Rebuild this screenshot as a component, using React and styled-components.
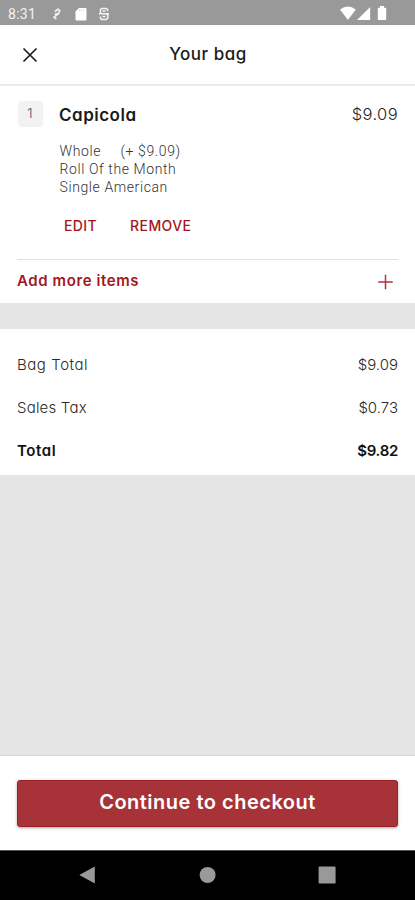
import styled, { createGlobalStyle } from "styled-components";

const options = ["Roll Of the Month", "Single American"];

const totals = [
  { name: "Bag Total", amount: "$9.09", space: "0.55px" },
  { name: "Sales Tax", amount: "$0.73", space: "0.2px" },
  { name: "Total", amount: "$9.82", bold: true, space: "0.6px" },
];

const App = () => {
  return (
    <>
      <GlobalStyle />
      <Screen>
        <StatusBar>
          <Clock>8:31</Clock>
          <StatusIcon width="10" height="14" viewBox="0 0 10 14">
            <path d="M2.8 4.6 6 2.2l1.8 1.5-1.2 2.6-3.8 1.1M7 6.6 4.2 8.4 2 10.2l2.4 1.8" fill="none" stroke="#eee" strokeWidth="1.7" />
          </StatusIcon>
          <SdCard width="12" height="14" viewBox="0 0 12 14">
            <path d="M4 1h6.5a1 1 0 0 1 1 1v10.5a1 1 0 0 1-1 1h-9a1 1 0 0 1-1-1V4.5z" fill="#fff" />
            <path d="M4.7 2.4v1.6M6.8 2.4v1.6M8.9 2.4v1.6" stroke="#ccc" strokeWidth="0.7" />
          </SdCard>
          <AppIcon width="12" height="14" viewBox="0 0 12 14">
            <path d="M9.6 4.2V2.5L8.4 1.6H3.6L2.4 2.8v2.7l1.2 1.2h4.8l1.4 1.3v3.2l-1.4 1.2H3.6l-1.2-1.2V9.5M1 6.7h10M4.5 4.1h3M4.5 9.6h3" fill="none" stroke="#f2f2f2" strokeWidth="1.5" />
          </AppIcon>
          <Spacer />
          <StatusIcon width="46" height="15" viewBox="0 0 46 15">
            <path d="M0 3.6Q7.9-2.4 15.8 3.6L7.9 14.1z" fill="#fff" />
            <path d="M30.2.9V14H17z" fill="#fff" />
            <path d="M40 .1h4v1.6h1.4q.8 0 .8.8v10.8q0 .8-.8.8h-6.8q-.8 0-.8-.8V2.5q0-.8.8-.8H40z" fill="#fff" />
          </StatusIcon>
        </StatusBar>

        <Header>
          <CloseIcon width="16" height="16" viewBox="0 0 16 16">
            <path d="M1.5 1.5l13 13M14.5 1.5l-13 13" stroke="#1c1c1c" strokeWidth="1.7" />
          </CloseIcon>
          <Title>Your bag</Title>
        </Header>

        <Bag>
          <ItemRow>
            <Quantity>1</Quantity>
            <ItemName>Capicola</ItemName>
            <Price>$9.09</Price>
          </ItemRow>
          <Options>
            <Option>
              <Size>Whole</Size>(+ $9.09)
            </Option>
            {options.map((option) => (
              <Option key={option}>{option}</Option>
            ))}
          </Options>
          <Actions>
            <Action>EDIT</Action>
            <Action>REMOVE</Action>
          </Actions>
          <AddMore>
            <AddLabel>Add more items</AddLabel>
            <svg width="16" height="16" viewBox="0 0 16 16">
              <path d="M8.5 .7v14.6M1.2 8h14.6" stroke="#b3323e" strokeWidth="1.5" />
            </svg>
          </AddMore>
        </Bag>

        <Totals>
          {totals.map((item) => (
            <TotalRow key={item.name} $bold={item.bold}>
              <TotalName $space={item.space}>{item.name}</TotalName>
              <Amount $bold={item.bold}>{item.amount}</Amount>
            </TotalRow>
          ))}
        </Totals>

        <Footer>
          <Checkout>Continue to checkout</Checkout>
        </Footer>

        <NavBar>
          <svg width="16" height="18" viewBox="0 0 16 18">
            <path d="M.3 9 15.8.6v17z" fill="#999" />
          </svg>
          <svg width="16" height="18" viewBox="0 0 16 18">
            <circle cx="8.6" cy="9" r="8" fill="#999" overflow="visible" />
          </svg>
          <svg width="18" height="18" viewBox="0 0 18 18">
            <rect x=".6" y=".6" width="17" height="17" rx="1.2" fill="#999" />
          </svg>
        </NavBar>
      </Screen>
    </>
  );
};

const GlobalStyle = createGlobalStyle`
  body {
    margin: 0;
  }
  * {
    box-sizing: border-box;
  }
  svg {
    display: block;
    flex: none;
    overflow: visible;
  }
`;

const Screen = styled.div`
  display: flex;
  flex-direction: column;
  width: 415px;
  height: 900px;
  overflow: hidden;
  background: #e5e5e5;
  font-family: Inter, "Open Sans", sans-serif;
  font-feature-settings: "cv11";
  white-space: nowrap;
`;

const StatusBar = styled.div`
  display: flex;
  align-items: center;
  flex: none;
  height: 25px;
  padding: 2px 29px 0 8px;
  background: #999;
`;

const Clock = styled.span`
  width: 44px;
  font: 400 14px/16px Roboto, sans-serif;
  letter-spacing: 0.3px;
  color: #f4f4f4;
`;

const StatusIcon = styled.svg`
  overflow: visible;
`;

const SdCard = styled(StatusIcon)`
  margin-left: 12.5px;
`;

const AppIcon = styled(StatusIcon)`
  margin-left: 11px;
`;

const Spacer = styled.div`
  flex: 1;
`;

const Header = styled.header`
  display: grid;
  grid-template-columns: 16px 1fr 16px;
  align-items: center;
  flex: none;
  height: 61px;
  padding: 0 22px;
  background: #fff;
  border-bottom: 2px solid #ececec;
`;

const CloseIcon = styled.svg`
  margin-top: 1px;
`;

const Title = styled.h1`
  margin: 0 0 2px;
  padding-left: 1px;
  text-align: center;
  font-size: 17px;
  line-height: 24px;
  font-weight: 500;
  letter-spacing: 0.5px;
  color: #1a1a1a;
`;

const Bag = styled.section`
  flex: none;
  height: 217px;
  padding: 15px 17px 0;
  background: #fff;
`;

const ItemRow = styled.div`
  display: flex;
  align-items: center;
  height: 26px;
`;

const Quantity = styled.span`
  width: 25px;
  height: 26px;
  margin: 0 16.5px 0 0.5px;
  border-radius: 4px;
  background: #f2f2f2;
  text-align: center;
  font-size: 13px;
  line-height: 25px;
  color: #777;
`;

const ItemName = styled.h2`
  flex: 1;
  margin: 0;
  padding-top: 1px;
  font-size: 17px;
  line-height: 26px;
  font-weight: 600;
  letter-spacing: 0.5px;
  color: #1a1a1a;
`;

const Price = styled.span`
  font-size: 16.5px;
  line-height: 26px;
  font-weight: 300;
  letter-spacing: 0.4px;
  color: #222;
`;

const Options = styled.div`
  margin: 15px 0 0 42.5px;
`;

const Option = styled.div`
  font: 300 14px/18px Roboto, sans-serif;
  letter-spacing: 0.6px;
  color: #333;
`;

const Size = styled.span`
  display: inline-block;
  width: 61px;
`;

const Actions = styled.div`
  display: flex;
  gap: 33px;
  margin: 19px 0 0 47px;
`;

const Action = styled.button`
  padding: 0;
  border: none;
  background: none;
  font: inherit;
  font-size: 14px;
  line-height: 22px;
  font-weight: 500;
  letter-spacing: 0.4px;
  color: #a31621;
`;

const AddMore = styled.div`
  display: flex;
  align-items: center;
  justify-content: space-between;
  height: 44px;
  margin-top: 22px;
  padding-right: 5px;
  border-top: 1.5px solid #e0e0e0;
`;

const AddLabel = styled.span`
  padding-bottom: 3px;
  font-size: 15px;
  font-weight: 600;
  letter-spacing: 0.6px;
  color: #a31621;
`;

const Totals = styled.section`
  flex: none;
  height: 146px;
  margin-top: 26px;
  padding: 14px 17px 0;
  background: #fff;
`;

const TotalRow = styled.div`
  display: flex;
  justify-content: space-between;
  height: 43px;
  font-size: 15px;
  line-height: 43px;
  font-weight: ${(props) => (props.$bold ? 600 : 300)};
  color: ${(props) => (props.$bold ? "#111" : "#2a2a2a")};
`;

const TotalName = styled.span`
  letter-spacing: ${(props) => props.$space};
`;

const Amount = styled.span`
  letter-spacing: ${(props) => (props.$bold ? "-0.3px" : "0")};
`;

const Footer = styled.footer`
  flex: none;
  height: 95px;
  margin-top: auto;
  padding: 24px 17px 0;
  border-top: 1px solid #d4d4d4;
  background: #fff;
`;

const Checkout = styled.button`
  display: block;
  width: 100%;
  height: 47px;
  padding: 0 0 4px;
  border: 1px solid #9e1f28;
  border-radius: 3px;
  background: #a73338;
  box-shadow: 0 1px 3px rgba(0, 0, 0, 0.35);
  font: inherit;
  font-size: 20px;
  font-weight: 600;
  letter-spacing: 0.5px;
  color: #fff;
`;

const NavBar = styled.nav`
  display: flex;
  align-items: center;
  justify-content: space-between;
  flex: none;
  height: 50px;
  padding: 0 79px 1px;
  border-top: 1px solid #555;
  background: #000;
`;

export default App;
